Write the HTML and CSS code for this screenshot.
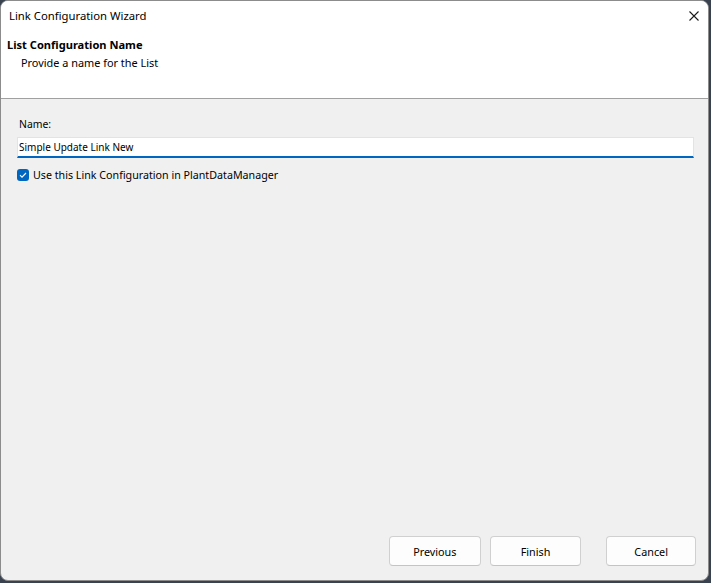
FILE: index.html
```html
<!DOCTYPE html>
<html>
    <head>
        <meta charset="UTF-8">
        <title>Link Configuration Wizard</title>
        <link rel="stylesheet" href="styles.css">
    </head>
    <body>
        <div class="dialog">
            <div class="titlebar">
                <span class="title">Link Configuration Wizard</span>
                <svg class="close" width="10" height="10" viewBox="0 0 10 10">
                    <path d="M0.5 0.5 L9.5 9.5 M9.5 0.5 L0.5 9.5" stroke="#1a1a1a" stroke-width="1.1" fill="none"/>
                </svg>
            </div>
            <div class="header">
                <div class="heading">List Configuration Name</div>
                <div class="subheading">Provide a name for the List</div>
            </div>
            <div class="content">
                <label class="field-label">Name:</label>
                <div class="input">Simple Update Link New</div>
                <div class="check-row">
                    <span class="checkbox">
                        <svg width="12" height="12" viewBox="0 0 12 12">
                            <path d="M3 6.2 L5 8.2 L9 4" stroke="#fff" stroke-width="1.1" fill="none"/>
                        </svg>
                    </span>
                    <span class="check-label">Use this Link Configuration in PlantDataManager</span>
                </div>
            </div>
            <div class="footer">
                <button class="btn">Previous</button>
                <button class="btn">Finish</button>
                <button class="btn cancel">Cancel</button>
            </div>
        </div>
    </body>
</html>
```
FILE: styles.css
```css
body {
  margin: 0;
  background: #3a4250;
  font-family: "Noto Sans", "DejaVu Sans", sans-serif;
  font-size: 11px;
  color: #000;
}

.dialog {
  width: 707px;
  height: 579px;
  border: 1px solid #8c8c8c;
  border-radius: 8px;
  background: #f0f0f0;
  display: flex;
  flex-direction: column;
  overflow: hidden;
}

.titlebar {
  height: 29px;
  background: #fff;
  display: flex;
  align-items: center;
  justify-content: space-between;
  padding: 0 9px 0 8px;
}

.title {
  font-size: 11.3px;
}

.close {
  margin-top: 1px;
}

.header {
  height: 68px;
  background: #fff;
  border-bottom: 1px solid #a0a0a0;
  padding: 0 6px;
}

.heading {
  font-weight: bold;
  font-size: 11.1px;
  line-height: 16px;
  margin-top: 7px;
}

.subheading {
  font-size: 10.9px;
  line-height: 16px;
  margin-top: 2px;
  padding-left: 14px;
}

.content {
  flex: 1;
  padding: 17px 14px 0 16px;
}

.field-label {
  display: block;
  padding-left: 2px;
  font-size: 10.4px;
  line-height: 16px;
}

.input {
  margin-top: 5px;
  height: 18px;
  line-height: 18px;
  font-size: 10px;
  background: #fff;
  border: 1px solid #e3e3e3;
  border-bottom: 2px solid #0067c0;
  padding-left: 1px;
}

.check-row {
  display: flex;
  align-items: center;
  gap: 4px;
  margin-top: 10px;
}

.check-label {
  font-size: 10.7px;
}

.checkbox {
  width: 12px;
  height: 12px;
  border-radius: 3px;
  background: #0067c0;
  display: flex;
}

.footer {
  display: flex;
  padding: 0 12px 14px 388px;
}

.btn {
  width: 92px;
  height: 30px;
  background: #fdfdfd;
  border: 1px solid #d0d0d0;
  border-bottom-color: #c4c4c4;
  border-radius: 4px;
  font-family: inherit;
  font-size: 10.8px;
  color: #000;
  margin-right: 9px;
}

.btn.cancel {
  width: 90px;
  margin-left: 16px;
  margin-right: 0;
}
```
